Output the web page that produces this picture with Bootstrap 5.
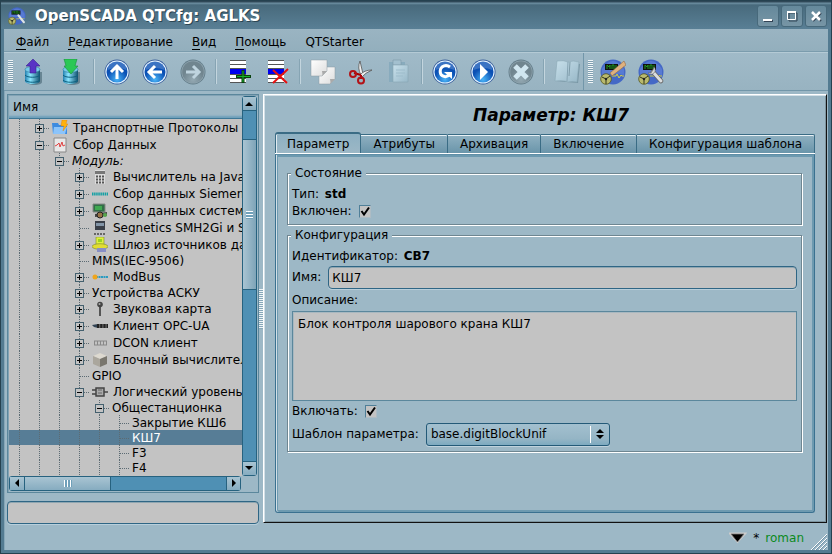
<!DOCTYPE html>
<html lang="ru">
<head>
<meta charset="utf-8">
<meta name="viewport" content="width=device-width, initial-scale=1">
<title>OpenSCADA QTCfg: AGLKS</title>
<link href="https://cdn.jsdelivr.net/npm/bootstrap@5.3.0/dist/css/bootstrap.min.css" rel="stylesheet">
<style>
:root{--bg:#9db8c6;--edge:#2f6685;--mid:#5b879c;--field:#c3c3c3;--trough:#4f90b4}
body{font-family:"DejaVu Sans",sans-serif;font-size:12px;line-height:15px;color:#000;background:#1d2b33}
button{color:#000}
.win{background:var(--bg);border:solid #537b91;border-width:0 4px 4px;box-shadow:inset 1px 0 #86a7b8;outline:1px solid #25414f;outline-offset:-1px}
.titlebar{height:29px;margin:0 -4px;padding:3px 5px 0 8px;background:linear-gradient(#2f4857 2px,#7092a4 3px,#486a7c 5px,#597f95);color:#fff;font-size:15px;font-weight:bold;text-shadow:1px 1px #2c4653;border-radius:0 3px 0 0}
.titlebar .cap{margin-left:9px}
.titlebar .wbtn{width:22px;height:22px;margin-left:2px;border:1px solid #47697b;border-radius:3px;background:linear-gradient(#65899b,#7795a5)}
.menus{height:23px;padding:5px 0 0 3px;background:linear-gradient(#9ab4c2,#93afbd);border-bottom:1px solid #7b9cad}
.menus a{color:#000;text-decoration:none;padding:0 10px 0 9px}
.menus a span{border-bottom:1px solid #000}
.tools{height:39px;border-top:1px solid #b4cad5;border-bottom:1px solid #7296a9;background:linear-gradient(#a0bac8,#98b3c1)}
.grip{width:5px;height:23px;margin:0 1px 0 4px;background:repeating-linear-gradient(#f2f6f8 0 1px,#7f9fb0 1px 2px)}
.tools button{width:38px;height:36px}
.tools button svg{width:26px;height:26px}
.vsep{width:2px;height:25px;margin:0 3px;border-left:1px solid #86a4b3;border-right:1px solid #c3d5de}
.tend{width:1px;margin-left:-3px;background:#7296a9}
.body{padding:3px 3px 0}
.side{width:252px}
.frame{border:1px solid var(--mid);box-shadow:inset 1px 1px #82a3b5;padding:1px}
.hdr{height:23px;padding:4px 4px 0;border-bottom:1px solid #3d7796;box-shadow:inset 0 -3px 2px -1px #6d9fba}
.rows{background:var(--field)}
.trow{height:15px;white-space:nowrap}
.trow.pic{height:17px;line-height:17px}
.gd{width:20px;flex:none;background:linear-gradient(#5c6b73 1px,transparent 1px) 10px 0/1px 2px repeat-y;position:relative}
.nd::after{content:"";position:absolute;left:11px;right:0;top:50%;height:1px;background:linear-gradient(90deg,#5c6b73 1px,transparent 1px) 0 0/2px 1px}
.bx{position:absolute;z-index:1;left:6px;top:50%;width:9px;height:9px;margin-top:-4px;border:1px solid #44606e;background:linear-gradient(#000,#000) center/5px 1px no-repeat var(--field)}
.bx.pl{background:linear-gradient(#000,#000) center/5px 1px no-repeat,linear-gradient(#000,#000) center/1px 5px no-repeat,var(--field)}
.trow svg{width:16px;height:16px;flex:none;margin:0 5px 0 3px;align-self:center}
.tx{padding:1px 0 0 3px}
svg+.tx{padding-left:0}
.sel{background:#577d96;color:#fff}
.sb{background:var(--trough);border:1px solid #27627f;border-radius:3px}
.sb button,.thumb{border:0 solid #27627f;padding:0;background:linear-gradient(#a9c4d2,#86acc0)}
.vsb{width:15px}
.vsb button{height:14px}
.vsb .thumb{height:151px;margin-top:28px;border-width:1px 0;background:linear-gradient(90deg,#a9c4d2,#7ea4b8)}
.vsb button:first-child{border-bottom-width:1px}
.vsb button:last-child{border-top-width:1px}
.hsb{height:15px}
.hsb button{width:14px}
.hsb button:last-child{border-left-width:1px}
.hsb .thumb{width:87px;border-width:0 1px}
.sb svg{display:block;margin:auto}
.vg{width:7px;height:8px;background:repeating-linear-gradient(#fff 0 1px,#6fa0ba 1px 3px)}
.hg{width:8px;height:7px;background:repeating-linear-gradient(90deg,#fff 0 1px,#6fa0ba 1px 3px)}
.inp{border:1px solid var(--edge);border-radius:4px;background:var(--field);height:23px;padding:0 3px;box-shadow:inset 0 1px #8fa6b1,0 1px #b9cfdb;color:#000;outline:0}
.split{width:6px}
.split i{width:4px;height:40px;background:repeating-linear-gradient(#eef4f7 0 1px,#86a7b8 1px 2px)}
.work{margin-bottom:1px;border:1px solid #fff;border-right-color:#111;border-bottom-color:#111;padding:9px 11px;box-shadow:inset 1px 1px #d3e0e7,inset -1px -1px #7d949f}
.work h1{font-size:17px;line-height:22px;font-weight:bold;font-style:italic;margin:0;padding-left:12px}
.tabset{margin:6px 0 0;height:22px}
.tabset button{height:19px;margin-bottom:1px;border:1px solid #3a6c85;border-width:1px 1px 0 0;padding:1px 12px 0;background:linear-gradient(#8fb0c1,#6a95aa);box-shadow:inset 0 1px #e9f1f5;border-radius:0 2px 0 0;line-height:15px;white-space:nowrap}
.tabset button.on{height:22px;margin-bottom:0;border-width:2px 1px 0;padding:0 11px;background:linear-gradient(#8db0c2,var(--bg));box-shadow:inset 1px 0 #e2ecf1;border-radius:3px 3px 0 0}
.pane{border:1px solid #3a7190;border-top-color:#5f8ea6;box-shadow:inset 1px 0 #d3e0e7,inset 0 0 0 2px #6d9ab0,0 -1px #fff;border-radius:0 0 3px 3px;padding:18px 12px 12px 11px}
fieldset{border:1px solid #6f8691;box-shadow:inset 1px 1px #fff,1px 1px #fff;position:relative;padding:9px 4px 5px;min-width:0}
fieldset+fieldset{margin-top:10px}
fieldset>legend{position:absolute;top:-8px;left:3px;float:none;width:auto;margin:0;padding:0 4px;background:var(--bg);font-size:12px;line-height:15px}
.info{padding:4px 0 2px}
.info b{margin-left:2px}
.lb{margin-right:7px}
.chk{appearance:none;width:12px;height:13px;margin:0;border:1px solid #4f7f98;border-right-color:#aebcc4;border-bottom-color:#aebcc4;background:var(--field) url("data:image/svg+xml,%3Csvg xmlns='http://www.w3.org/2000/svg' viewBox='0 0 10 11'%3E%3Cpath d='M1.500 5L4 8.500 9 1.500' fill='none' stroke='%23000' stroke-width='2'/%3E%3C/svg%3E") center/10px 11px no-repeat}
.dlb{margin:4px 0 3px}
.incl{margin:3px 0 4px}
textarea.desc{height:90px;border:1px solid var(--mid);background:var(--field);color:#000;padding:5px;resize:none;outline:0;display:block;box-shadow:inset 1px 1px #a9b8c0}
.cmb select{appearance:none;width:184px;height:23px;padding:0 24px 0 4px;border:1px solid #245a78;border-radius:3px;color:#000;background:linear-gradient(#a3c0cf,#95b5c5 70%,#7daac0);box-shadow:0 1px #c0d3dd;outline:0}
.cmb span{position:absolute;right:6px;top:3px;height:17px;border-left:1px solid #fff;padding:2px 0 0 5px;pointer-events:none}
.cmb svg{display:block}
.stat{height:26px;padding:3px 0 0}
.stat .star{margin:0 6px}
.usr{color:#0b8a1c}
</style>
</head>
<body>
<svg width="0" height="0" class="position-absolute" aria-hidden="true">
<defs>
<linearGradient id="db" x2="1"><stop stop-color="#237fb0"/><stop offset=".35" stop-color="#8be6ff"/><stop offset="1" stop-color="#12506e"/></linearGradient>
<radialGradient id="ball" cy=".85"><stop stop-color="#49b4f7"/><stop offset="1" stop-color="#0b50b4"/></radialGradient>
<radialGradient id="dim" cy=".85"><stop stop-color="#94a9b3"/><stop offset="1" stop-color="#70858f"/></radialGradient>
<linearGradient id="paper" x2="1" y2="1"><stop stop-color="#fff"/><stop offset="1" stop-color="#dcdcdc"/></linearGradient>
<linearGradient id="pale" x2="1" y2="1"><stop stop-color="#c8e0eb"/><stop offset="1" stop-color="#98b8c8"/></linearGradient>
<symbol id="base" viewBox="0 0 26 26"><path d="M6 12v10c0 4 15 4 15 0V12z" fill="#345362" opacity=".5" transform="translate(1 1)"/><path d="M5 10v12c0 4 15 4 15 0V10z" fill="url(#db)"/><path d="M5 16c2 3 13 3 15 0M5 21c2 3 13 3 15 0" stroke="#0d617f" fill="none"/><ellipse cx="12.500" cy="10.500" rx="7.500" ry="3" fill="#76cbea" stroke="#347c9a" stroke-width=".6"/></symbol>
<symbol id="blue" viewBox="0 0 26 26"><circle cx="13" cy="13" r="12.500" fill="#3b5f9b"/><circle cx="13" cy="13" r="11.600" fill="#e4f3ff"/><circle cx="13" cy="13" r="10.500" fill="url(#ball)"/><path d="M3.500 11a9.500 9 0 0 1 19 0Q13 7 3.500 11" fill="#fff" opacity=".2"/></symbol>
<symbol id="grey" viewBox="0 0 26 26"><circle cx="13" cy="13" r="12.500" fill="#647d89"/><circle cx="13" cy="13" r="11.600" fill="#8fa5b0"/><circle cx="13" cy="13" r="10.800" fill="url(#dim)"/></symbol>
<symbol id="list" viewBox="0 0 26 26"><path d="M4 1h16v23H4z" fill="#fff"/><path d="M4 1.500h16M4 5.500h16M4 9.500h16M4 15.500h16M4 19.500h16M4 23.500h16" stroke="#555"/><path d="M4 10h16v5H4z" fill="#00e"/></symbol>
<symbol id="scada" viewBox="0 0 26 26"><circle cx="13" cy="13" r="12.500" fill="#4468c6"/><path d="M2 10Q13-6 24 10v6Q13 13 2 16" fill="#6487dc" opacity=".6"/><path d="M5 5h13v6H5z" fill="#111"/><path d="M7 10V6l2 2 1-2v4M12 10V6h2v4M16 6v4" stroke="#1f9a1f" fill="none"/><path d="M12 17h4l1-2 2 4 2-3 1 1h2" stroke="#d2ce4b" fill="none"/><circle cx="6" cy="20" r="5.300" fill="#b9ba6e" stroke="#54551c" stroke-width=".8"/><path d="M6 20v5M6 20l-4-2M6 20l4-3" stroke="#30351a" stroke-width="1"/><circle cx="6" cy="20" r="1.200" fill="#222"/></symbol>
</defs></svg>

<div class="win d-flex flex-column min-vh-100">
<header class="titlebar d-flex align-items-center">
 <svg width="18" height="18" viewBox="0 0 26 26" aria-hidden="true"><use href="#scada"/><path d="M15 12l8 10" stroke="#dde3e6" stroke-width="3" stroke-linecap="round"/></svg>
 <span class="cap flex-grow-1">OpenSCADA QTCfg: AGLKS</span>
 <button class="wbtn p-0 d-flex" aria-label="Свернуть"><svg width="20" height="20" viewBox="0 0 20 20"><path d="M6 15h9" stroke="#345" stroke-width="2"/><path d="M5 14h9" stroke="#fff" stroke-width="2"/></svg></button>
 <button class="wbtn p-0 d-flex" aria-label="Развернуть"><svg width="20" height="20" viewBox="0 0 20 20"><path d="M7 7h8v8H7z" fill="none" stroke="#345"/><path d="M5.500 6.500h8v7h-8z" fill="none" stroke="#fff"/><path d="M5 6h9" stroke="#fff" stroke-width="2"/></svg></button>
 <button class="wbtn p-0 d-flex" aria-label="Закрыть"><svg width="20" height="20" viewBox="0 0 20 20"><path d="M7 7l8 8M15 7l-8 8" stroke="#345" stroke-width="2"/><path d="M6 6l8 8M14 6l-8 8" stroke="#fff" stroke-width="2.500"/></svg></button>
</header>
<nav class="menus d-flex align-items-center" aria-label="Меню">
 <a href="#"><span>Ф</span>айл</a><a href="#"><span>Р</span>едактирование</a><a href="#"><span>В</span>ид</a><a href="#"><span>П</span>омощь</a><a href="#">QTStarter</a>
</nav>
<div class="tools d-flex align-items-center" role="toolbar" aria-label="Инструменты">
 <i class="grip"></i>
 <button class="btn border-0 p-0" aria-label="Загрузить из БД"><svg viewBox="0 0 26 26"><use href="#base"/><path d="M13 0l7 7h-4v7h-6V7H6z" fill="#5934c5" stroke="#3a2191" stroke-width=".6"/></svg></button>
 <button class="btn border-0 p-0" aria-label="Сохранить в БД"><svg viewBox="0 0 26 26"><use href="#base"/><path d="M6 0h13l-2 7h3l-7 8-7-8h2z" fill="#2bc855" stroke="#16903a" stroke-width=".6"/></svg></button>
 <i class="vsep"></i>
 <button class="btn border-0 p-0" aria-label="Вверх"><svg viewBox="0 0 26 26"><use href="#blue"/><path d="M13 20V7M7 13l6-6 6 6" stroke="#fff" stroke-width="3" fill="none"/></svg></button>
 <button class="btn border-0 p-0" aria-label="Назад"><svg viewBox="0 0 26 26"><use href="#blue"/><path d="M20 13H7M13 7l-6 6 6 6" stroke="#fff" stroke-width="3" fill="none"/></svg></button>
 <button class="btn border-0 p-0" aria-label="Вперёд"><svg viewBox="0 0 26 26"><use href="#grey"/><path d="M6 13h13M13 7l6 6-6 6" stroke="#bfd4df" stroke-width="3" fill="none"/></svg></button>
 <i class="vsep"></i>
 <button class="btn border-0 p-0" aria-label="Добавить"><svg viewBox="0 0 26 26"><use href="#list"/><path d="M17 11v13M10 17.500h15" stroke="#08400c" stroke-width="3"/><path d="M17 12v11M11 17.500h13" stroke="#16b42a"/></svg></button>
 <button class="btn border-0 p-0" aria-label="Удалить"><svg viewBox="0 0 26 26"><use href="#list"/><path d="M9 11l14 13M24 10L9 24" stroke="#e81010" stroke-width="2"/></svg></button>
 <i class="vsep"></i>
 <button class="btn border-0 p-0" aria-label="Копировать"><svg viewBox="0 0 26 26"><path d="M9 8h16v12l-5 5H9z" fill="url(#paper)" stroke="#889aa3" stroke-width=".5"/><path d="M20 25c1-2 0-4 0-5h5z" fill="#aaa"/><path d="M1 1h16v11l-5 5H1z" fill="url(#paper)" stroke="#889aa3" stroke-width=".5"/><path d="M12 17c1-2 0-4 0-5h5z" fill="#aaa"/></svg></button>
 <button class="btn border-0 p-0" aria-label="Вырезать"><svg viewBox="0 0 26 26"><path d="M12 2l3 13-2 1q-4-7-1-14" fill="#eee" stroke="#555" stroke-width=".8"/><path d="M24 11q-8 0-12 5l2 2q3-4 10-7" fill="#eee" stroke="#555" stroke-width=".8"/><path d="M6 14l7 2M13 16v4" stroke="#a00" stroke-width="2"/><circle cx="5" cy="15" r="3" fill="none" stroke="#b31217" stroke-width="2"/><circle cx="13" cy="21.500" r="3" fill="none" stroke="#b31217" stroke-width="2"/></svg></button>
 <button class="btn border-0 p-0" aria-label="Вставить"><svg viewBox="0 0 26 26"><path d="M3 3h16v20H3z" fill="#88abbd"/><path d="M7 1h8v5H7z" fill="#a3c0cf" stroke="#7d99a7" stroke-width=".6"/><path d="M7 6h15v17H7z" fill="url(#pale)" stroke="#86a4b2" stroke-width=".6"/><path d="M10 11h9M10 14h9M10 17h7" stroke="#9dbccb"/></svg></button>
 <i class="vsep"></i>
 <button class="btn border-0 p-0" aria-label="Обновить"><svg viewBox="0 0 26 26"><use href="#blue"/><path d="M18 8q-4-3-8 0c-3 3-2 8 1 9q4 2 7-2" stroke="#fff" stroke-width="3" fill="none"/><path d="M12 13h8v7z" fill="#fff"/></svg></button>
 <button class="btn border-0 p-0" aria-label="Запустить"><svg viewBox="0 0 26 26"><use href="#blue"/><path d="M10 5l8 8-8 8z" fill="#fff"/></svg></button>
 <button class="btn border-0 p-0" aria-label="Остановить"><svg viewBox="0 0 26 26"><use href="#grey"/><path d="M7 7l12 12M19 7L7 19" stroke="#d0e6f0" stroke-width="5"/></svg></button>
 <i class="vsep"></i>
 <button class="btn border-0 p-0" aria-label="Руководство"><svg viewBox="0 0 26 26"><path d="M4 3l22 2-2 19-22-2z" fill="#7896a5"/><path d="M3 2q7-1 11 1 5-2 11 0l-2 20q-5-1-9 0-4-2-13-1z" fill="url(#pale)" stroke="#8aa7b5" stroke-width=".6"/><path d="M14 3l-1 19" stroke="#86a4b3"/><path d="M16 3l-1 14" stroke="#6f8d9b" stroke-width=".8"/></svg></button>
 <i class="tend h-100"></i>
 <i class="grip"></i>
 <button class="btn border-0 p-0" aria-label="Разработка интерфейса"><svg viewBox="0 0 26 26"><use href="#scada"/><path d="M10 14L24 2l2 4-14 11z" fill="#dfb17e" stroke="#946a42" stroke-width=".6"/></svg></button>
 <button class="btn border-0 p-0" aria-label="Конфигуратор"><svg viewBox="0 0 26 26"><use href="#scada"/><path d="M15 13l8 9" stroke="#666" stroke-width="4.500" stroke-linecap="round"/><path d="M15 13l8 9" stroke="#d9dcde" stroke-width="3" stroke-linecap="round"/><path d="M16 8a4 4 0 1 1-6 6l3 0 2-3z" fill="#d9dcde" stroke="#666" stroke-width=".6"/></svg></button>
</div>

<main class="body d-flex flex-grow-1">
<aside class="side d-flex flex-column flex-shrink-0">
 <div class="frame flex-grow-1 d-flex flex-column">
 <div class="d-flex flex-grow-1">
  <div class="flex-grow-1 overflow-hidden d-flex flex-column">
  <div class="hdr flex-shrink-0">Имя</div>
  <div class="rows flex-grow-1">
   <div class="trow pic d-flex"><i class="gd"></i><i class="gd nd"><b class="bx pl"></b></i><svg viewBox="0 0 16 16"><path d="M0 3h6l1 2h8v9H1z" fill="#3d8be0"/><path d="M2 7h13l-2 7H1z" fill="#8cc4fa"/><path d="M10 0h5l-1 4h2l-5 7 1-5H9z" fill="#ffb20d" stroke="#e07b00" stroke-width=".4"/></svg><span class="tx">Транспортные Протоколы</span></div>
   <div class="trow pic d-flex"><i class="gd"></i><i class="gd nd"><b class="bx"></b></i><svg viewBox="0 0 16 16"><path d="M2 1h12v14H2z" fill="#e8e8e8" stroke="#888"/><path d="M3 9l2-1 2-2 1 4 2-5 1 4 2-1" fill="none" stroke="#e04040"/></svg><span class="tx">Сбор Данных</span></div>
   <div class="trow d-flex"><i class="gd"></i><i class="gd"></i><i class="gd nd"><b class="bx"></b></i><span class="tx fst-italic">Модуль:</span></div>
   <div class="trow pic d-flex"><i class="gd"></i><i class="gd"></i><i class="gd"></i><i class="gd nd"><b class="bx pl"></b></i><svg viewBox="0 0 16 16"><path d="M3 1h10v14H3z" fill="#ddd"/><path d="M3 2h10v3H3z" fill="#777"/><path d="M4 7.500h9M4 10.500h9M4 13.500h9" stroke="#555" stroke-width="2" stroke-dasharray="2 1"/></svg><span class="tx">Вычислитель на JavaLike</span></div>
   <div class="trow pic d-flex"><i class="gd"></i><i class="gd"></i><i class="gd"></i><i class="gd nd"><b class="bx pl"></b></i><svg viewBox="0 0 16 16"><path d="M0 8h16" stroke="#14a0a4" stroke-width="3" stroke-dasharray="1.500 .6"/></svg><span class="tx">Сбор данных Siemens</span></div>
   <div class="trow pic d-flex"><i class="gd"></i><i class="gd"></i><i class="gd"></i><i class="gd nd"><b class="bx pl"></b></i><svg viewBox="0 0 16 16"><path d="M1 1h12v8H1z" fill="#316f47" stroke="#888"/><path d="M3 3h7v4H3z" fill="#40a951"/><path d="M3 11l12-2v4L3 14z" fill="#444"/><circle cx="8" cy="12" r="3" fill="#987348" stroke="#222"/><circle cx="13" cy="12" r="2" fill="#57a64d"/></svg><span class="tx">Сбор данных системы</span></div>
   <div class="trow pic d-flex"><i class="gd"></i><i class="gd"></i><i class="gd"></i><i class="gd nd"></i><svg viewBox="0 0 16 16"><path d="M3 1h10v9H3z" fill="#3a3f48"/><path d="M4 3h8v3H4z" fill="#8395a7"/><path d="M2 14h12" stroke="#666" stroke-width="2" stroke-dasharray="2 1"/></svg><span class="tx">Segnetics SMH2Gi и SMH4</span></div>
   <div class="trow pic d-flex"><i class="gd"></i><i class="gd"></i><i class="gd"></i><i class="gd nd"><b class="bx pl"></b></i><svg viewBox="0 0 16 16"><path d="M4 0h8v8H4z" fill="#dff03e" stroke="#7c8d28" stroke-width=".6"/><path d="M6 2h4v3H6z" fill="#99d31f"/><ellipse cx="8" cy="9.500" rx="8" ry="2.800" fill="#e1dc32" stroke="#75842b" stroke-width=".6"/><path d="M5 11h9v4H5z" fill="#888fc5"/></svg><span class="tx">Шлюз источников данных</span></div>
   <div class="trow d-flex"><i class="gd"></i><i class="gd"></i><i class="gd"></i><i class="gd nd"></i><span class="tx">MMS(IEC-9506)</span></div>
   <div class="trow pic d-flex"><i class="gd"></i><i class="gd"></i><i class="gd"></i><i class="gd nd"><b class="bx pl"></b></i><svg viewBox="0 0 16 16"><path d="M4 8h12" stroke="#2a9bc0" stroke-width="2" stroke-dasharray="2 .5"/><circle cx="3" cy="8" r="2.500" fill="#efa51d"/></svg><span class="tx">ModBus</span></div>
   <div class="trow d-flex"><i class="gd"></i><i class="gd"></i><i class="gd"></i><i class="gd nd"><b class="bx pl"></b></i><span class="tx">Устройства АСКУ</span></div>
   <div class="trow pic d-flex"><i class="gd"></i><i class="gd"></i><i class="gd"></i><i class="gd nd"><b class="bx pl"></b></i><svg viewBox="0 0 16 16"><path d="M8 4v11" stroke="#555" stroke-width="2"/><circle cx="8" cy="3.500" r="2.800" fill="#444"/><circle cx="7.500" cy="3" r="1" fill="#aaa"/></svg><span class="tx">Звуковая карта</span></div>
   <div class="trow pic d-flex"><i class="gd"></i><i class="gd"></i><i class="gd"></i><i class="gd nd"><b class="bx pl"></b></i><svg viewBox="0 0 16 16"><path d="M0 7l6-1v4L2 9z" fill="#345"/><path d="M5 8h11" stroke="#222" stroke-width="4" stroke-dasharray="2.600 .5"/></svg><span class="tx">Клиент OPC-UA</span></div>
   <div class="trow pic d-flex"><i class="gd"></i><i class="gd"></i><i class="gd"></i><i class="gd nd"><b class="bx pl"></b></i><svg viewBox="0 0 16 16"><path d="M2 6h13M2 10h13" stroke="#888"/><path d="M2 8h13" stroke="#888" stroke-width="4" stroke-dasharray="1 2"/></svg><span class="tx">DCON клиент</span></div>
   <div class="trow pic d-flex"><i class="gd"></i><i class="gd"></i><i class="gd"></i><i class="gd nd"><b class="bx pl"></b></i><svg viewBox="0 0 16 16"><path d="M8 1l7 3-7 3-7-3z" fill="#ddd9d0"/><path d="M1 4l7 3v8l-7-3z" fill="#aaa69d"/><path d="M15 4L8 7v8l7-3z" fill="#79766e"/></svg><span class="tx">Блочный вычислитель</span></div>
   <div class="trow d-flex"><i class="gd"></i><i class="gd"></i><i class="gd"></i><i class="gd nd"></i><span class="tx">GPIO</span></div>
   <div class="trow pic d-flex"><i class="gd"></i><i class="gd"></i><i class="gd"></i><i class="gd nd"><b class="bx"></b></i><svg viewBox="0 0 16 16"><path d="M4 4h8v8H4z" fill="#aaa" stroke="#444" stroke-width="1.500"/><path d="M0 6h4M0 10h4M12 8h4" stroke="#444" stroke-width="1.500"/><path d="M6 6h4M6 9h4" stroke="#666"/></svg><span class="tx">Логический уровень</span></div>
   <div class="trow d-flex"><i class="gd"></i><i class="gd"></i><i class="gd"></i><i class="gd"></i><i class="gd nd"><b class="bx"></b></i><span class="tx">Общестанционка</span></div>
   <div class="trow d-flex"><i class="gd"></i><i class="gd"></i><i class="gd"></i><i class="gd"></i><i class="gd"></i><i class="gd nd"></i><span class="tx">Закрытие КШ6</span></div>
   <div class="trow d-flex sel"><i class="gd"></i><i class="gd"></i><i class="gd"></i><i class="gd"></i><i class="gd"></i><i class="gd nd"></i><span class="tx">КШ7</span></div>
   <div class="trow d-flex"><i class="gd"></i><i class="gd"></i><i class="gd"></i><i class="gd"></i><i class="gd"></i><i class="gd nd"></i><span class="tx">F3</span></div>
   <div class="trow d-flex"><i class="gd"></i><i class="gd"></i><i class="gd"></i><i class="gd"></i><i class="gd"></i><i class="gd nd"></i><span class="tx">F4</span></div>
  </div>
  </div>
  <div class="sb vsb d-flex flex-column flex-shrink-0">
   <button aria-label="Прокрутить вверх"><svg width="9" height="5"><path d="M0 5l4-4 4 4z"/></svg></button>
   <div class="thumb d-flex align-items-center justify-content-center"><i class="vg"></i></div>
   <button class="mt-auto" aria-label="Прокрутить вниз"><svg width="9" height="5"><path d="M0 0l4 4 4-4z"/></svg></button>
  </div>
 </div>
 <div class="sb hsb d-flex me-3 flex-shrink-0">
  <button aria-label="Прокрутить влево"><svg width="5" height="9"><path d="M4 0L0 4l4 4z"/></svg></button>
  <div class="thumb d-flex align-items-center justify-content-center"><i class="hg"></i></div>
  <button class="ms-auto" aria-label="Прокрутить вправо"><svg width="5" height="9"><path d="M1 0l4 4-4 4z"/></svg></button>
 </div>
 </div>
 <input class="inp mt-2 w-100" type="text" aria-label="Поиск">
</aside>
<div class="split d-flex align-items-center justify-content-center"><i></i></div>
<section class="work flex-grow-1 d-flex flex-column">
 <h1 class="text-center">Параметр: КШ7</h1>
 <div class="tabset d-flex align-items-end" role="tablist">
  <button class="on" role="tab" aria-selected="true">Параметр</button><button role="tab">Атрибуты</button><button role="tab">Архивация</button><button role="tab">Включение</button><button class="flex-grow-1" role="tab">Конфигурация шаблона</button>
 </div>
 <div class="pane flex-grow-1">
  <fieldset><legend>Состояние</legend>
   <div class="info">Тип: <b>std</b></div>
   <div class="d-flex align-items-center"><label for="on1" class="lb">Включен:</label><input class="chk" type="checkbox" id="on1" checked></div>
  </fieldset>
  <fieldset><legend>Конфигурация</legend>
   <div class="info">Идентификатор: <b>СВ7</b></div>
   <div class="d-flex align-items-center"><label for="nm" class="lb">Имя:</label><input class="inp flex-grow-1" id="nm" type="text" value="КШ7"></div>
   <label for="ds" class="dlb d-block">Описание:</label>
   <textarea class="desc w-100" id="ds">Блок контроля шарового крана КШ7</textarea>
   <div class="incl d-flex align-items-center"><label for="on2" class="lb">Включать:</label><input class="chk" type="checkbox" id="on2" checked></div>
   <div class="d-flex align-items-center"><label for="tp" class="lb">Шаблон параметра:</label><div class="cmb position-relative"><select id="tp"><option>base.digitBlockUnif</option></select><span><svg width="8" height="12"><path d="M0 5l4-4 4 4zM0 7l4 4 4-4z"/></svg></span></div></div>
  </fieldset>
 </div>
</section>
</main>
<footer class="stat d-flex align-items-center justify-content-end">
 <svg width="18" height="13" viewBox="0 0 18 13"><path d="M2 2h13L8.500 9z" stroke="#ccc" stroke-width="3"/><path d="M2 2h13L8.500 10z" stroke="#777" stroke-width=".8"/></svg>
 <span class="star">*</span><span class="usr">roman</span>
 <svg class="align-self-end ms-1" width="20" height="17" viewBox="0 0 20 17"><path d="M3 17L19 1M7 17L19 5M11 17l8-8M15 17l4-4" stroke="#fff"/><path d="M4 17L19 2M8 17L19 6M12 17l7-7M16 17l3-3" stroke="#6488a0" stroke-width=".8"/></svg>
</footer>
</div>
<script src="https://cdn.jsdelivr.net/npm/bootstrap@5.3.0/dist/js/bootstrap.bundle.min.js"></script>
</body>
</html>
